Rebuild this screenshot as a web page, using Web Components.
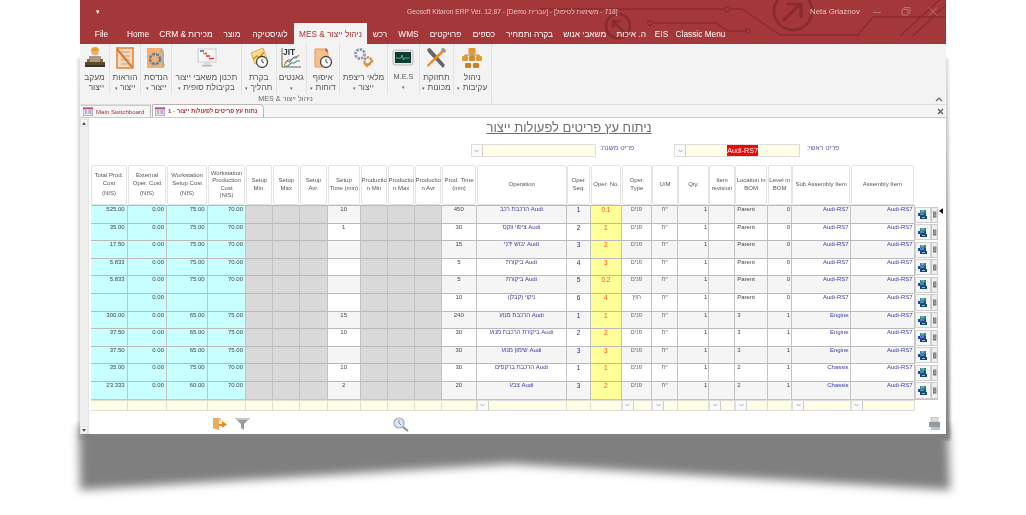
<!DOCTYPE html>
<html lang="he"><head><meta charset="utf-8"><title>Geosoft Kitaron ERP</title>
<style>
html,body{margin:0;background:#fff}
body{width:1026px;height:515px;overflow:hidden;position:relative;font-family:"Liberation Sans",Arial,sans-serif}
</style></head><body>
<erp-shadow></erp-shadow>
<erp-window>
  <erp-titlebar></erp-titlebar>
  <erp-ribbon></erp-ribbon>
  <erp-doctabs></erp-doctabs>
  <bom-form></bom-form>
</erp-window>
<script>
const FONT='"Liberation Sans",Arial,sans-serif';
function def(name,css,html,after){
  customElements.define(name,class extends HTMLElement{
    connectedCallback(){
      if(this.shadowRoot)return;
      const r=this.attachShadow({mode:'open'});
      r.innerHTML='<style>'+css+'</style>'+(typeof html==='function'?html(this):html);
      if(after)after(r,this);
    }
  });
}
/* ---------- decorative page shadow ---------- */
def('erp-shadow',':host{position:absolute;left:0;top:0;width:1026px;height:515px;display:block}svg{display:block}',`
<svg width="1026" height="515" viewBox="0 0 1026 515">
<defs><filter id="b" x="-5%" y="-5%" width="110%" height="120%"><feGaussianBlur stdDeviation="5"/></filter>
<filter id="s" x="-50%" y="-5%" width="200%" height="110%"><feGaussianBlur stdDeviation="1.6"/></filter>
<linearGradient id="g" x1="0" y1="0" x2="0" y2="1"><stop offset="0" stop-color="#d4d4d4"/><stop offset=".6" stop-color="#9a9a9a"/><stop offset="1" stop-color="#808080"/></linearGradient></defs>
<polygon points="945,56 948,60 950,440 940,440" fill="url(#g)" filter="url(#s)"/>
<polygon points="81,56 78,60 78,440 88,440" fill="#d4d4d4" filter="url(#s)"/>
<polygon points="79,425 948,425 950,490 510,464 80,490" fill="#7f7f7f" filter="url(#b)"/>
</svg>`);
/* ---------- window ---------- */
def('erp-window',':host{position:relative;display:flex;flex-direction:column;width:866px;height:434px;margin-left:80px;filter:blur(.5px);background:#fff;font-family:'+FONT+'}','<slot></slot>');
/* ---------- title bar ---------- */
const TABS=[['File',37,3],['Home',32,2],['CRM & מכירות',64],['מוצר',28],['לוגיסטיקה',48],['MES & ניהול ייצור',73,0,1],['רכש',26],['WMS',31],['פרויקטים',43],['כספים',34],['בקרה ותמחיר',57],['משאבי אנוש',53.5],['ה. איכות',39.5],['EIS',21],['Classic Menu',57]];
def('erp-titlebar',`
:host{display:block;position:relative;height:44px;background:#a4373a;color:#f4dede;overflow:hidden;flex:none}
svg.bg{position:absolute;left:0;top:0}
.top{position:relative;display:flex;align-items:center;height:23px;font-size:7px}
.qa{width:36px;text-align:center;font-size:7px;color:#fff;flex:none}
.title{margin-left:291px;width:213px;flex:none;white-space:nowrap;color:#e3c0c1;font-size:6.7px;text-align:left}
.user{margin-left:190px;font-size:7.8px;color:#e6c0c1;width:53px;flex:none;white-space:nowrap}
.wc{display:flex;color:#bd7072;flex:none}
.wc svg{display:block;width:28px;height:12px}
.tabs{position:relative;display:flex;height:21px;align-items:stretch;font-size:8.3px}
.t{display:flex;align-items:center;justify-content:center;white-space:nowrap;flex:none;color:#fff;padding-top:1px;box-sizing:border-box}
.t.on{background:#f3f3f3;color:#a4373a;height:21px}
`,()=>`
<svg class="bg" width="866" height="44" fill="none" stroke="#8a2c2f" stroke-width="1.3">
<path d="M460 9H645M650 9H662L700 35H780"/><circle cx="647" cy="9.5" r="2.4"/>
<path d="M572 23H636L648 31H665"/><circle cx="570" cy="23" r="2.4"/><circle cx="668" cy="31" r="2.4"/>
<circle cx="538" cy="26" r="12" stroke-width="2.6"/><path d="M544 32L534 22M533 28V21H541" stroke-width="2.6"/>
<circle cx="713" cy="11" r="19" stroke-width="2.8"/><path d="M703 21L720 4M707 4H721V18" stroke-width="3.2"/>
<path d="M777 36L793 17H866M820 36L866 -6M833 36L868 3"/>
</svg>
<div class="top"><div class="qa">▾</div><div class="title" dir="ltr">Geosoft Kitaron ERP Ver. 12.87 - [Demo עברית] - [718 - משימות לטיפול]</div><div class="user">Neta Griaznov</div>
<div class="wc"><svg viewBox="0 0 28 12" stroke="currentColor" fill="none"><path d="M10 6.500H18"/></svg><svg viewBox="0 0 28 12" stroke="currentColor" fill="none"><path d="M11 3.500H17V9H11ZM13 3.500V1.500H19V7H17"/></svg><svg viewBox="0 0 28 12" stroke="currentColor" fill="none"><path d="M10 1.500L18 9.500M18 1.500L10 9.500"/></svg></div></div>
<div class="tabs">${TABS.map(t=>`<div class="t${t[3]?' on':''}" style="width:${t[1]}px;margin-left:${t[2]||0}px">${t[0]}</div>`).join('')}</div>`);
/* ---------- ribbon ---------- */
const IC={
track:`<rect x="5" y="9" width="12" height="7" fill="#a89a86"/><circle cx="11" cy="5" r="3.6" fill="#d9b38c"/><path d="M7 4a4 4 0 0 1 8 0z" fill="#f0a020"/><rect x="1" y="15" width="20" height="3" fill="#5c4a2c"/><rect x="1" y="18" width="20" height="2" fill="#333"/><path d="M3 12h3v3H3zM16 12h3v3h-3z" fill="#8a6a3a"/>`,
instr:`<rect x="3" y="1" width="16" height="20" fill="#f7d9b8" stroke="#e08a3c" stroke-width="1.6"/><path d="M7 5h9M7 9h9M7 13h9M7 17h9" stroke="#999" stroke-width=".8"/><path d="M3 2L18 20" stroke="#e2762a" stroke-width="2"/>`,
eng:`<path d="M2 1h14l3 3v17H2z" fill="#f0b070"/><circle cx="10" cy="12" r="5" fill="none" stroke="#5a7fa8" stroke-width="2.4" stroke-dasharray="3 1"/><circle cx="10" cy="12" r="2" fill="#f0b070"/><path d="M17 1l2 7-1 4 2 7-2 1-2-7 1-5-2-6z" fill="#aaa"/>`,
plan:`<rect x="3" y="2" width="18" height="13" fill="#f6f6f6" stroke="#ccc"/><path d="M5 4h4M8 6.500h4M11 9h4M14 11.500h5" stroke-width="1.600" stroke="#e03030"/><path d="M5 4h3" stroke="#40a0d0" stroke-width="1.600"/><path d="M8 6.500h2" stroke="#f0c040" stroke-width="1.600"/><path d="M9 15h6l1 3H8z" fill="#ddd"/><rect x="7" y="18" width="10" height="1.500" fill="#bbb"/>`,
proc:`<path d="M3 6l12-5 4 11-12 5z" fill="#f9dd8a" stroke="#e0b040"/><path d="M5 12l4-3 2 2 5-6" fill="none" stroke="#e08020" stroke-width="1.400"/><circle cx="14" cy="15" r="5.500" fill="#fff" stroke="#444" stroke-width="1.300"/><path d="M14 12v3l2 1" stroke="#444" fill="none"/>`,
gantt:`<text x="3" y="8" font-family="Liberation Sans" font-weight="700" font-size="8.500" fill="#333">JIT</text><path d="M2 1v19h19" stroke="#666" fill="none"/><path d="M4 18l3-4 3 1 3-4 3 0 3-3" stroke="#d08030" stroke-width="1.200" fill="none"/><path d="M4 19h4l3-3h3l3-2h3" stroke="#3a9a60" stroke-width="1.200" fill="none"/><path d="M5 16l3-3 3 0 3-3h3" stroke="#4070c0" stroke-width="1" fill="none"/>`,
report:`<path d="M3 2h12l1 5v13H3z" fill="#f5c08a" stroke="#e89858"/><path d="M13 1l3 3-2 1z" fill="#e03030"/><circle cx="14" cy="15" r="5.500" fill="#fff" stroke="#444" stroke-width="1.300"/><path d="M14 12v3l2 1" stroke="#444" fill="none"/>`,
gears:`<circle cx="8" cy="7" r="4.500" fill="none" stroke="#8a9ab0" stroke-width="2.800" stroke-dasharray="2.400 1"/><circle cx="16" cy="14" r="3.500" fill="none" stroke="#c08a40" stroke-width="2.400" stroke-dasharray="2 1"/><path d="M12 16l3 3 6-6" stroke="#e09030" stroke-width="2" fill="none"/>`,
mes:`<rect x="1" y="3" width="20" height="15" rx="2" fill="#e8e8e8" stroke="#bbb"/><rect x="3" y="5" width="16" height="11" fill="#123a32"/><path d="M4 11h5l1-3 1.500 5 1-2h5" stroke="#50d0a0" fill="none" stroke-width=".8"/>`,
tools:`<path d="M2 2l3-1 15 17-2 3L3 5z" fill="#666"/><path d="M20 2l-3 5-11 10-3 3-1-2 3-3L16 4z" fill="#e78a20"/><path d="M17 1a4 4 0 0 1 4 4l-3 1-2-3z" fill="#999"/>`,
org:`<rect x="7.500" y="1" width="7" height="6" rx="1" fill="#e09a30"/><rect x="1" y="9" width="6" height="5" rx="1" fill="#e09a30"/><rect x="15" y="9" width="6" height="5" rx="1" fill="#e09a30"/><rect x="8" y="9" width="6" height="5" rx="1" fill="#d88a20"/><rect x="4" y="16" width="6" height="5" rx="1" fill="#c88020"/><rect x="12" y="16" width="6" height="5" rx="1" fill="#c88020"/><path d="M11 7v2M4 9V8h14v1" stroke="#a87020" fill="none"/>`
};
const RB=[['track','מעקב','ייצור',30,0],['instr','הוראות','ייצור',31,1],['eng','הנדסת','ייצור',31,1],['plan','תכנון משאבי ייצור','בקיבולת סופית',69.7,1],['proc','בקרת','תהליך',35,1],['gantt','גאנטים','',30,1],['report','איסוף','דוחות',33.3,1],['gears','מלאי ריצפת','ייצור',48,1],['mes','M.E.S','',32,1,7.4],['tools','תחזוקת','מכונות',34,1],['org','ניהול','עקיבות',37.6,1]];
def('ribbon-btn',`
:host{display:flex;flex-direction:column;align-items:center;flex:none;box-sizing:border-box;height:50px;font-size:8.3px;color:#555;border-right:1px solid #e2e2e2;padding-top:3px}
svg{width:22px;height:22px;display:block;flex:none}
.l{height:10.5px;line-height:10.5px;white-space:nowrap}
.l:first-of-type{margin-top:2.500px}
.a{font-size:5px;color:#666}
`,h=>`<svg viewBox="0 0 22 22">${IC[h.getAttribute('icon')]}</svg><div class="l" dir="rtl">${h.getAttribute('a')}</div><div class="l"><span class="a">${h.getAttribute('arrow')?'▾':'&nbsp;'}</span>${h.getAttribute('b')?' '+h.getAttribute('b'):''}</div>`);
def('erp-ribbon',`
:host{display:block;position:relative;height:61px;background:#f3f3f3;border-bottom:1px solid #dcdcdc;box-sizing:border-box;flex:none}
.row{display:flex;width:412px}
.grp{width:412px;border-right:1px solid #e0e0e0;box-sizing:border-box;height:60px}
.cap{text-align:center;font-size:7.200px;color:#666;height:10px;line-height:10px}
.ch{position:absolute;right:3px;top:52px;width:8px;height:6px}
`,()=>`<div class="grp"><div class="row">${RB.map(r=>`<ribbon-btn style="width:${r[3]}px${r[5]?';font-size:'+r[5]+'px':''}" icon="${r[0]}" a="${r[1]}" b="${r[2]}" ${r[4]?'arrow="1"':''}></ribbon-btn>`).join('')}</div><div class="cap" dir="ltr">MES &amp; ניהול ייצור</div></div>
<svg class="ch" viewBox="0 0 8 6" fill="none" stroke="#666" stroke-width="1.200"><path d="M1 5l3-3 3 3"/></svg>`);
/* ---------- doc tabs ---------- */
const FORMICON='<svg viewBox="0 0 10 9" width="10" height="9"><rect width="10" height="9" fill="#e9e3ef" stroke="#8a6aa0" stroke-width=".8"/><path d="M0 1.500h10" stroke="#b04a80" stroke-width="1.500"/><path d="M2 4h2M2 6h2M5.500 4h3M5.500 6h3" stroke="#7060a0" stroke-width=".8"/></svg>';
def('erp-doctabs',`
:host{display:flex;align-items:flex-end;position:relative;background:#f5f5f5;border-bottom:1px solid #c9c9c9;box-sizing:content-box;flex:none;font-size:6.100px;padding-left:1px;height:12px}
.d{display:flex;align-items:center;gap:3px;height:12px;padding-left:2px;white-space:nowrap;color:#a4373a;box-sizing:border-box}
.a{width:70px;background:#f5f5f5;border-right:1px solid #bbb;border-top:1px solid #ccc}
.b{width:112px;background:#fff;border:1px solid #c0b0b0;border-bottom:0;border-radius:2px 5px 0 0;font-weight:700;color:#b02a2c;font-size:6px;margin-left:1px;height:13px}
.x{position:absolute;right:2px;top:3px;width:7px;height:7px}
`,()=>`<div class="d a">${FORMICON}<span>Main Switchboard</span></div><div class="d b">${FORMICON}<span dir="ltr">נתוח עץ פריטים לפעולות ייצור - 1</span></div>
<svg class="x" viewBox="0 0 7 7" stroke="#555" stroke-width="1.200"><path d="M1 1l5 5M6 1l-5 5"/></svg>`);
/* ---------- combo ---------- */
def('erp-combo',`
:host{display:flex;align-items:center;box-sizing:border-box;height:100%;background:#fefee6;border:1px solid #ddd;font-size:7.200px;color:#fff;min-width:0}
.b{width:10px;flex:none;align-self:stretch;background:#fafafa;border-right:1px solid #ccc;display:flex;align-items:center;justify-content:center}
svg{width:5px;height:4px}
.v{flex:1;text-align:center;min-width:0}
::slotted(span){background:#f00808;padding:1px 0}
`,`<div class="b"><svg viewBox="0 0 5 4" fill="none" stroke="#999" stroke-width=".8"><path d="M.5 1l2 2 2-2"/></svg></div><div class="v"><slot></slot></div>`);
/* ---------- grid ---------- */
const COLS='37px 39.300px 40.700px 38.300px 27px 27px 27.700px 33px 27.300px 27px 27px 34.700px 90.600px 23.700px 31px 30.300px 26px 31px 26px 32.400px 24.600px 58.400px 64px 16px 7px';
const HEAD=['Total Prod.<br>Cost<i></i>(NIS)','External<br>Oper. Cost<i></i>(NIS)','Workstation<br>Setup Cost<i></i>(NIS)','Workstation<br>Production<br>Cost<br>(NIS)','Setup<br>Min.','Setup<br>Max','Setup<br>Avr.','Setup<br>Time (min)','Productio<br>n Min','Productio<br>n Max','Productio<br>n Avr','Prod. Time<br>(min)','Operation','Oper.<br>Seq.','Oper. No.','Oper.<br>Type','U/M','Qty.','Item<br>revision','Location in<br>BOM','Level in<br>BOM','Sub Assembly Item','Assembly Item'];
const A='Audi-RS7';
const ROWS=[
['525.00','75.00','70.00','10','450','Audi הרכבת רכב','1','0.1','פנים','Parent','0',A],
['35.00','75.00','70.00','1','30','Audi ציפוי ווקס','2','1','פנים','Parent','0',A],
['17.50','75.00','70.00','','15','Audi יבוש ידני','3','2','פנים','Parent','0',A],
['5.833','75.00','70.00','','5','Audi ביקורת','4','3','פנים','Parent','0',A],
['5.833','75.00','70.00','','5','Audi ביקורת','5','0.2','פנים','Parent','0',A],
['','','','','10','ניקוי (קבלן)','6','4','חוץ','Parent','0',A],
['300.00','65.00','75.00','15','240','Audi הרכבת מנוע','1','1','פנים','3','1','Engine'],
['37.50','65.00','75.00','10','30','Audi ביקורת הרכבת מנוע','2','2','פנים','3','1','Engine'],
['37.50','65.00','75.00','','30','Audi שימון מנוע','3','3','פנים','3','1','Engine'],
['35.00','75.00','70.00','10','30','Audi הרכבת ברקסים','1','1','פנים','2','1','Chassis'],
['23.333','60.00','70.00','2','20','Audi צבע','3','2','פנים','2','1','Chassis']];
const BTN1='<svg viewBox="0 0 9 9" width="9" height="9"><rect x="2" y="0" width="6" height="3" fill="#2a8a8a"/><rect x="0" y="3" width="8" height="3" fill="#1a4a9a"/><rect x="2" y="6" width="7" height="3" fill="#154a70"/><path d="M3 1h3M2 4h4M4 7.500h3" stroke="#fff" stroke-width=".6"/></svg>';
const BTN2='<svg viewBox="0 0 6 9" width="6" height="9"><rect x="0" y="0" width="5" height="9" fill="#777"/><path d="M1 2h3M1 4h3M1 6h3" stroke="#ddd" stroke-width=".7"/></svg>';
def('bom-grid',`
:host{display:block;font-size:6px;color:#555;position:relative}
.r{display:grid;grid-template-columns:${COLS}}
.h{height:39.500px;margin-bottom:.500px}
.h>div{box-sizing:border-box;background:#fff;border:1px solid #e3e3e3;border-radius:2px;display:flex;align-items:center;justify-content:center;text-align:center;line-height:7.500px;color:#555;margin-right:.500px}
.h i{display:block;height:3px}
.d{height:17.600px}
.d>div{box-sizing:border-box;border-top:1.500px solid #b9b9b9;border-right:1px solid #c2c2c2;padding:0 1px 0;white-space:nowrap;overflow:hidden;line-height:7.500px;background:var(--b)}
.d>.c{background:#c8ffff;text-align:right;padding-right:2px;color:#444}
.d>.g{background:#d9d9d9}
.d>.m{text-align:center;color:#444}
.d>.o{text-align:center;color:#3838a8}
.d>.q{text-align:center;color:#26269a;font-size:6.500px}
.d>.y{background:#ffff99;text-align:center;color:#ff4a1a;font-size:6.500px}
.d>.rr{text-align:right;color:#444}
.d>.ll{text-align:left;padding-left:2px;color:#444}
.d>.lk{text-align:right;color:#3838a8}
.d>.cc{text-align:center;color:#666}
.d>.bn{background:#f6f6f6;border:1px solid #d2d2d2;display:flex;align-items:center;justify-content:center;padding:0;margin:1.500px 0 0}
.d>.bn2{background:#eee;border:1px solid #c8c8c8;display:flex;align-items:center;padding:0 0 0 1px;margin:1.500px 0 0;overflow:hidden}
.f{height:12px;border-top:1.500px solid #c4c4c4;margin-top:0;position:relative}
.f>div{box-sizing:border-box;background:#fefee6;border:1px solid #e0e0d0;border-left:0;height:11px}
.f>erp-combo{height:11px}
.ar{position:absolute;right:-5.500px;top:43px;width:0;height:0;border:3.500px solid transparent;border-right:4px solid #111;border-left:0}
`,()=>{
  const comboAt=new Set([12,15,16,18,19,21,22]);
  let foot='';for(let i=0;i<23;i++)foot+=comboAt.has(i)?'<erp-combo></erp-combo>':'<div></div>';
  const rows=ROWS.map((r,i)=>{
    const b=i%2?'#fff':'#f5f5f5';
    return `<div class="r d" style="--b:${b}"><div class="c">${r[0]}</div><div class="c">0.00</div><div class="c">${r[1]}</div><div class="c">${r[2]}</div><div class="g"></div><div class="g"></div><div class="g"></div><div class="m">${r[3]}</div><div class="g"></div><div class="g"></div><div class="g"></div><div class="m">${r[4]}</div><div class="o" dir="rtl">${r[5]}</div><div class="q">${r[6]}</div><div class="y">${r[7]}</div><div class="cc">${r[8]}</div><div class="cc">יח'</div><div class="rr">1</div><div></div><div class="ll">${r[9]}</div><div class="rr">${r[10]}</div><div class="lk">${r[11]}</div><div class="lk">${A}</div><div class="bn">${BTN1}</div><div class="bn2">${BTN2}</div></div>`;
  }).join('');
  return `<div class="r h">${HEAD.map(h=>`<div><span>${h}</span></div>`).join('')}</div>${rows}<div class="r f">${foot}</div><div class="ar"></div>`;
});
/* ---------- form ---------- */
def('bom-form',`
:host{display:flex;flex:1;min-height:0;background:#fff;color:#666;overflow:hidden}
.sb{width:9px;flex:none;display:flex;flex-direction:column;background:#f0f0f0;border-right:1px solid #e4e4e4;box-sizing:border-box}
.sb b{display:flex;align-items:center;justify-content:center;height:8px;background:#f8f8f8;border:1px solid #e2e2e2;box-sizing:border-box}
.sb b:first-child{margin-top:1px}
.sb span{flex:1}
.sb svg{width:4px;height:3px}
.c{flex:1;min-width:0;padding-left:1.700px;display:flex;flex-direction:column}
h1{margin:2px 0 0;padding-left:396px;width:165px;font-weight:400;font-size:13px;line-height:16px;height:16px;color:#6e6e6e;text-decoration:underline;white-space:nowrap;text-underline-offset:1px}
.flt{display:flex;align-items:center;height:13px;margin:8px 0 0 380px;font-size:6.800px;color:#5858a8}
.c1{width:125px;flex:none}.c2{width:126px;margin-left:40px;flex:none}
.fl{margin-left:4.500px;width:34px;flex:none;white-space:nowrap;position:relative;top:-3px}
.fl.two{margin-left:5px}
bom-grid{margin-top:8px;width:847px}
.bar{display:flex;align-items:flex-start;padding-top:5px}
.bar svg{display:block;flex:none}
`,`
<div class="sb"><b><svg viewBox="0 0 4 3" fill="#555"><path d="M2 0l2 3H0z"/></svg></b><span></span><b><svg viewBox="0 0 4 3" fill="#555"><path d="M2 3L0 0h4z"/></svg></b></div>
<div class="c">
<h1 dir="rtl">ניתוח עץ פריטים לפעולות ייצור</h1>
<div class="flt"><erp-combo class="c1"></erp-combo><span class="fl" dir="rtl">פריט משנה:</span><erp-combo class="c2"><span>Audi-RS7</span></erp-combo><span class="fl two" dir="rtl">פריט ראשי:</span></div>
<bom-grid></bom-grid>
<div class="bar">
<svg style="margin-left:121px" width="16" height="14" viewBox="0 0 16 14"><path d="M1 1h6v12L1 11z" fill="#e8a050"/><path d="M1 1h8v3H7v8H1z" fill="#f0b060" opacity=".7"/><path d="M7 7h3V4l5 3.500-5 3.500V9H7z" fill="#f08a10"/></svg>
<svg style="margin-left:7px" width="15" height="14" viewBox="0 0 15 14"><path d="M0 1h15L9 7v6L6 11V7z" fill="#9a9a9a"/><path d="M0 1h15l-2 2H2z" fill="#c6c6c6"/></svg>
<svg style="margin-left:143px" width="16" height="15" viewBox="0 0 16 15"><circle cx="6" cy="6" r="5" fill="#dde8f4" stroke="#a0a8b0" stroke-width="1.200"/><path d="M6 3v3l2 2" stroke="#6a8ac0" fill="none"/><path d="M10 10l5 4" stroke="#888" stroke-width="1.800"/></svg>
<svg style="margin-left:520px" width="11" height="14" viewBox="0 0 11 14"><rect x="2" y="0" width="7" height="5" fill="#ddd" stroke="#aaa" stroke-width=".6"/><rect x="0" y="5" width="11" height="5" fill="#999"/><rect x="2" y="10" width="9" height="3" fill="#b0c8dc"/></svg>
</div>
</div>`);
</script>
</body></html>
